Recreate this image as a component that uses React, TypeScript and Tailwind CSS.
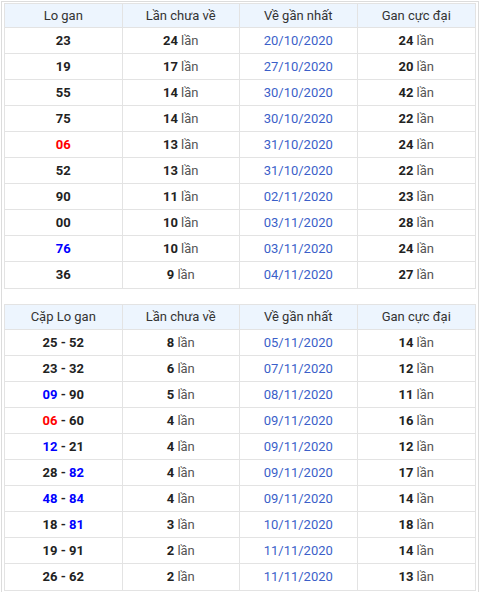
import React from "react";

type Part = { t: string; c?: "red" | "blue" };
type Row = { a: Part[]; n: string; d: string; g: string };

const t1: Row[] = [
  { a: [{ t: "23" }], n: "24", d: "20/10/2020", g: "24" },
  { a: [{ t: "19" }], n: "17", d: "27/10/2020", g: "20" },
  { a: [{ t: "55" }], n: "14", d: "30/10/2020", g: "42" },
  { a: [{ t: "75" }], n: "14", d: "30/10/2020", g: "22" },
  { a: [{ t: "06", c: "red" }], n: "13", d: "31/10/2020", g: "24" },
  { a: [{ t: "52" }], n: "13", d: "31/10/2020", g: "22" },
  { a: [{ t: "90" }], n: "11", d: "02/11/2020", g: "23" },
  { a: [{ t: "00" }], n: "10", d: "03/11/2020", g: "28" },
  { a: [{ t: "76", c: "blue" }], n: "10", d: "03/11/2020", g: "24" },
  { a: [{ t: "36" }], n: "9", d: "04/11/2020", g: "27" },
];

const t2: Row[] = [
  { a: [{ t: "25" }, { t: " - " }, { t: "52" }], n: "8", d: "05/11/2020", g: "14" },
  { a: [{ t: "23" }, { t: " - " }, { t: "32" }], n: "6", d: "07/11/2020", g: "12" },
  { a: [{ t: "09", c: "blue" }, { t: " - " }, { t: "90" }], n: "5", d: "08/11/2020", g: "11" },
  { a: [{ t: "06", c: "red" }, { t: " - " }, { t: "60" }], n: "4", d: "09/11/2020", g: "16" },
  { a: [{ t: "12", c: "blue" }, { t: " - " }, { t: "21" }], n: "4", d: "09/11/2020", g: "12" },
  { a: [{ t: "28" }, { t: " - " }, { t: "82", c: "blue" }], n: "4", d: "09/11/2020", g: "17" },
  { a: [{ t: "48", c: "blue" }, { t: " - " }, { t: "84", c: "blue" }], n: "4", d: "09/11/2020", g: "14" },
  { a: [{ t: "18" }, { t: " - " }, { t: "81", c: "blue" }], n: "3", d: "10/11/2020", g: "18" },
  { a: [{ t: "19" }, { t: " - " }, { t: "91" }], n: "2", d: "11/11/2020", g: "14" },
  { a: [{ t: "26" }, { t: " - " }, { t: "62" }], n: "2", d: "11/11/2020", g: "13" },
];

function Lan({ n }: { n: string }) {
  return (
    <span>
      <span className="font-bold text-[#222]">{n}</span>
      <span className="text-[#555]"> lần</span>
    </span>
  );
}

function Table({ first, rows, tall }: { first: string; rows: Row[]; tall?: boolean }) {
  const cell = "flex items-center justify-center border-r border-[#e3e3e3]";
  const last = "flex items-center justify-center";
  return (
    <div className="w-[472px] border border-[#e3e3e3]">
      <div
        className={
          "grid grid-cols-4 bg-[#edf5fe] border-b border-[#e3e3e3] text-[#333] " +
          (tall ? "h-[25px]" : "h-[24px]")
        }
      >
        <div className={cell}>{first}</div>
        <div className={cell}>Lần chưa về</div>
        <div className={cell}>Về gần nhất</div>
        <div className={last}>Gan cực đại</div>
      </div>
      {rows.map((r, i) => (
        <div
          key={i}
          className={
            "grid grid-cols-4 h-[26px] " +
            (i < rows.length - 1 ? "border-b border-[#e3e3e3]" : "")
          }
        >
          <div className={cell + " font-bold text-[#222]"}>
            {r.a.map((p, j) => (
              <span
                key={j}
                className={
                  p.c === "red"
                    ? "text-[#ff0000]"
                    : p.c === "blue"
                    ? "text-[#0000ff]"
                    : ""
                }
                style={{ whiteSpace: "pre" }}
              >
                {p.t}
              </span>
            ))}
          </div>
          <div className={cell}>
            <Lan n={r.n} />
          </div>
          <div className={cell + " text-[#3b5fc9]"}>{r.d}</div>
          <div className={last}>
            <Lan n={r.g} />
          </div>
        </div>
      ))}
    </div>
  );
}

export default function App() {
  return (
    <div
      className="w-[480px] h-[592px] bg-white overflow-hidden text-[13px]"
      style={{ fontFamily: "Roboto, 'Liberation Sans', sans-serif" }}
    >
      <div className="ml-[1px] mt-[1px] w-[478px] h-[591px] border-l border-t border-r border-[#dcdcdc] pl-[2px] pt-[1px]">
        <Table first="Lo gan" rows={t1} />
        <div className="h-[15px]" />
        <Table first="Cặp Lo gan" rows={t2} tall />
      </div>
    </div>
  );
}
